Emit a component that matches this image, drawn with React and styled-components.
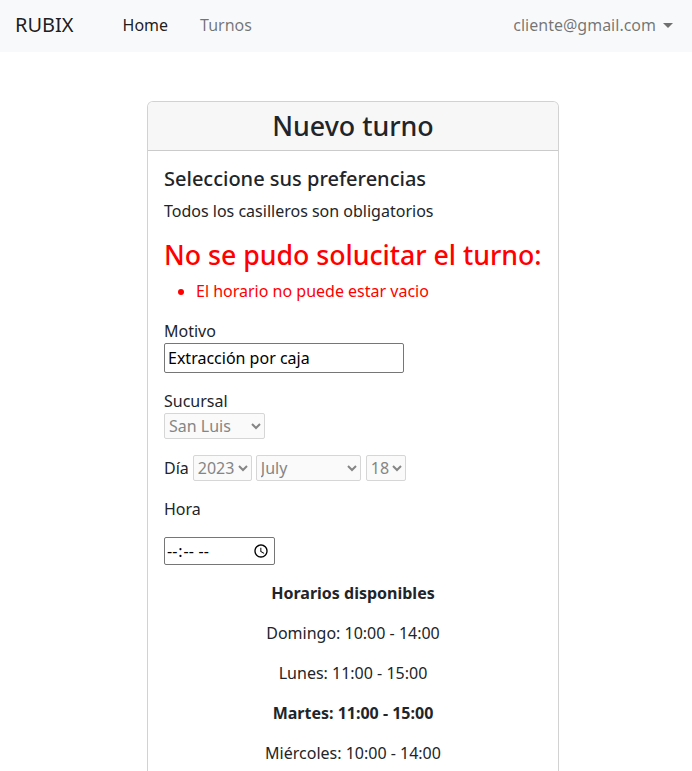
import React from "react";
import styled, { createGlobalStyle } from "styled-components";

const Global = createGlobalStyle`
  * { box-sizing: border-box; }
  body {
    margin: 0;
    font-family: "Noto Sans", "Open Sans", sans-serif;
    font-size: 16px;
    line-height: 1.5;
    color: #212529;
    background: #fff;
  }
`;

const Navbar = styled.nav`
  height: 52px;
  background: #f8f9fa;
  display: flex;
  align-items: center;
  padding: 0 19px 2px 15px;
`;

const Brand = styled.a`
  font-size: 20px;
  color: rgba(0, 0, 0, 0.9);
  text-decoration: none;
  margin-right: 33px;
`;

const NavLinks = styled.div`
  display: flex;
  flex: 1;
`;

const NavLink = styled.a`
  font-size: 16px;
  padding: 8px 16px;
  color: ${(p) => (p.$active ? "rgba(0,0,0,0.9)" : "rgba(0,0,0,0.55)")};
  text-decoration: none;
`;

const UserMenu = styled.a`
  display: flex;
  align-items: center;
  gap: 7px;
  color: rgba(0, 0, 0, 0.55);
  text-decoration: none;
  font-size: 16px;
`;

const Caret = styled.span`
  width: 0;
  height: 0;
  border-top: 5px solid rgba(0, 0, 0, 0.55);
  border-left: 5px solid transparent;
  border-right: 5px solid transparent;
  margin-top: 1px;
`;

const Main = styled.main`
  display: flex;
  justify-content: center;
  padding-top: 49px;
  padding-left: 14px;
`;

const Card = styled.div`
  width: 412px;
  border: 1px solid rgba(0, 0, 0, 0.176);
  border-radius: 6px;
  background: #fff;
`;

const CardHeader = styled.div`
  background: #f7f7f7;
  border-bottom: 1px solid rgba(0, 0, 0, 0.176);
  border-radius: 5px 5px 0 0;
  padding: 8px 16px;
  text-align: center;
`;

const Title = styled.h2`
  margin: 0;
  font-size: 26.8px;
  font-weight: 500;
  line-height: 32px;
`;

const CardBody = styled.div`
  padding: 16px;
`;

const SubTitle = styled.h5`
  margin: 0 0 8px;
  font-size: 20px;
  font-weight: 500;
  line-height: 1.2;
`;

const Text = styled.p`
  margin: 0 0 16px;
  text-align: ${(p) => (p.$center ? "center" : "left")};
  font-weight: ${(p) => (p.$bold ? 700 : 400)};
`;

const ErrorTitle = styled.h3`
  margin: 0 0 8px;
  font-size: 26.7px;
  font-weight: 500;
  line-height: 1.2;
  color: #ff0000;
  white-space: nowrap;
`;

const ErrorList = styled.ul`
  margin: 0 0 16px;
  padding-left: 32px;
  color: #ff0000;
`;

const Field = styled.div`
  margin-bottom: 16px;
`;

const Label = styled.label`
  display: block;
  margin-bottom: ${(p) => p.$mb || "0"};
`;

const InlineLabel = styled.label`
  margin-right: 4px;
`;

const TextInput = styled.input`
  display: block;
  width: 240px;
  height: 30px;
  font: inherit;
  font-size: 16px;
  padding: 1px 3px;
  border: 1px solid #767676;
  border-radius: 2px;
  color: #000;
`;

const Select = styled.select`
  display: block;
  width: ${(p) => p.$w};
  height: 26px;
  font-family: inherit;
  font-size: 16px;
  margin-right: ${(p) => p.$mr || "0"};
  color: #858585;
  background-color: #fafafa;
  border: 1px solid #d6d6d6;
  border-radius: 2px;
  opacity: 1;
`;

const DateRow = styled.div`
  display: flex;
  align-items: center;
  height: 26px;
  margin-bottom: 16px;
`;

const TimeInput = styled.input`
  display: block;
  width: 111px;
  height: 28px;
  font-family: inherit;
  font-size: 16px;
  border: 1px solid #767676;
  border-radius: 2px;
  padding: 1px 1px;
  color: #000;
`;

export default function App() {
  return (
    <>
      <Global />
      <Navbar>
        <Brand href="#">RUBIX</Brand>
        <NavLinks>
          <NavLink href="#" $active>Home</NavLink>
          <NavLink href="#">Turnos</NavLink>
        </NavLinks>
        <UserMenu href="#">
          cliente@gmail.com
          <Caret />
        </UserMenu>
      </Navbar>
      <Main>
        <Card>
          <CardHeader>
            <Title>Nuevo turno</Title>
          </CardHeader>
          <CardBody>
            <SubTitle>Seleccione sus preferencias</SubTitle>
            <Text>Todos los casilleros son obligatorios</Text>
            <ErrorTitle>No se pudo solucitar el turno:</ErrorTitle>
            <ErrorList>
              <li>El horario no puede estar vacio</li>
            </ErrorList>
            <Field>
              <Label>Motivo</Label>
              <TextInput defaultValue="Extracción por caja" />
            </Field>
            <Field>
              <Label>Sucursal</Label>
              <Select $w="101px" disabled>
                <option>San Luis</option>
              </Select>
            </Field>
            <DateRow>
              <InlineLabel>Día</InlineLabel>
              <Select $w="59px" $mr="4px" disabled>
                <option>2023</option>
              </Select>
              <Select $w="105px" $mr="5px" disabled>
                <option>July</option>
              </Select>
              <Select $w="40px" disabled>
                <option>18</option>
              </Select>
            </DateRow>
            <Field>
              <Label $mb="16px">Hora</Label>
              <TimeInput type="time" />
            </Field>
            <Text $center $bold>Horarios disponibles</Text>
            <Text $center>Domingo: 10:00 - 14:00</Text>
            <Text $center>Lunes: 11:00 - 15:00</Text>
            <Text $center $bold>Martes: 11:00 - 15:00</Text>
            <Text $center>Miércoles: 10:00 - 14:00</Text>
            <Text $center>Jueves: 11:00 - 15:00</Text>
            <Text $center>Viernes: 11:00 - 15:00</Text>
            <Text $center>Sábado: 10:00 - 14:00</Text>
          </CardBody>
        </Card>
      </Main>
    </>
  );
}
